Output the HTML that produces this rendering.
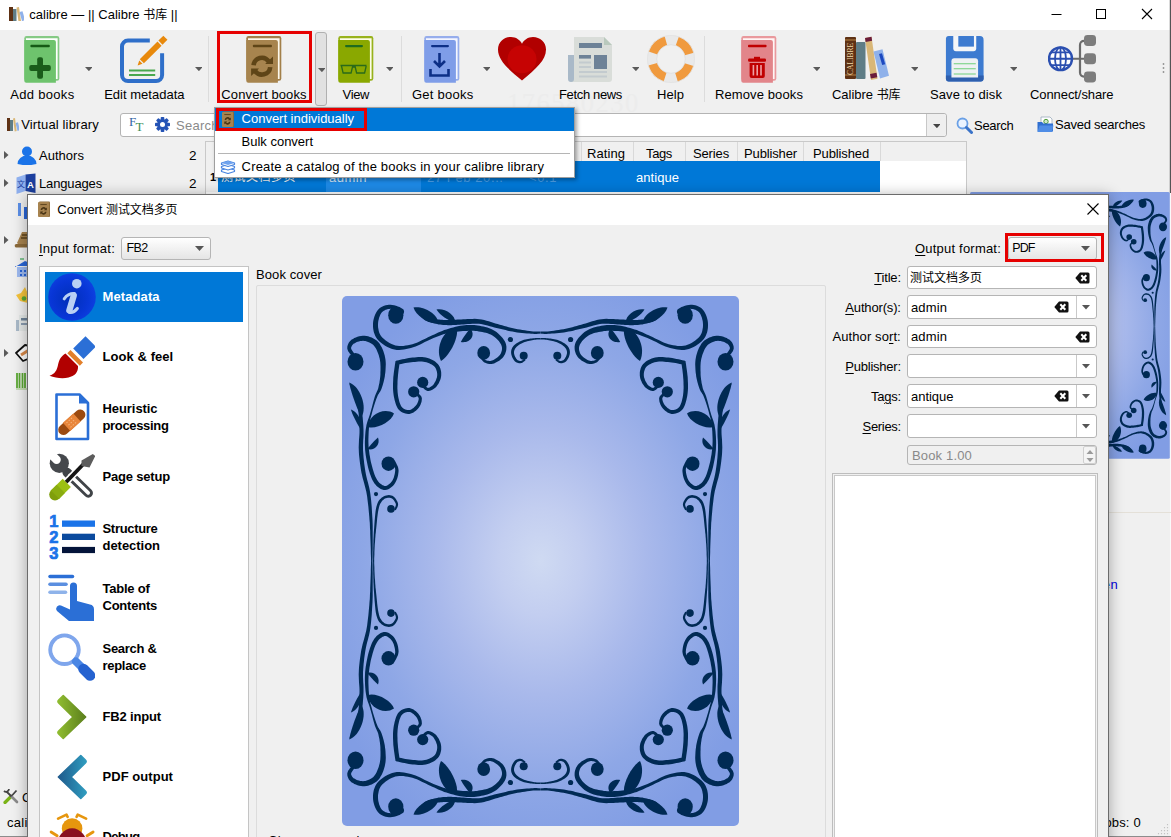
<!DOCTYPE html>
<html><head><meta charset="utf-8"><title>calibre</title>
<style>
html,body{margin:0;padding:0;}
body{width:1171px;height:837px;overflow:hidden;position:relative;background:#f0f0f0;font-family:"Liberation Sans","Noto Sans CJK SC",sans-serif;}
.b{position:absolute;box-sizing:border-box;display:block;}
.t{position:absolute;white-space:pre;line-height:1;display:block;}
u{text-decoration:underline;text-underline-offset:1.5px;text-decoration-thickness:1px;}
</style></head><body>
<div class="b" style="left:0px;top:0px;width:1171px;height:30px;background:#fff;"></div>
<svg class="b" style="left:9px;top:6px;" width="15" height="15" viewBox="0 0 15 15" preserveAspectRatio="none"><rect x="0" y="1" width="4" height="14" fill="#5e3114"/><rect x="4" y="3" width="3.500" height="12" fill="#5f7d86"/><path d="M7.500 1.500 l2.500 -0.500 l2 14 l-2.500 0.500z" fill="#d9b777"/><path d="M10.500 6 l3 -0.800 l2.500 9 l-3 0.900z" fill="#8fb1ea"/></svg>
<span class="t" style="left:29.30px;top:8.30px;font-size:13px;color:#000;letter-spacing:0.010px;">calibre — || Calibre <span style="font-size:0.923em">书库</span> ||</span>
<svg class="b" style="left:1040px;top:0px;" width="131" height="30" viewBox="0 0 131 30" preserveAspectRatio="none"><path d="M11.500 14.500 h10" stroke="#000" stroke-width="1"/><rect x="56.500" y="9.500" width="9" height="9" fill="none" stroke="#000" stroke-width="1"/><path d="M102 9 l10 10 M112 9 l-10 10" stroke="#000" stroke-width="1.100"/></svg>
<div class="b" style="left:0px;top:30px;width:1171px;height:78px;background:#f0f0f0;"></div>
<span class="t" style="left:507px;top:90px;font-family:'Liberation Serif',serif;font-size:26.500px;letter-spacing:1.500px;color:#ececec;">176580230</span>
<div class="b" style="left:208px;top:36px;width:1px;height:66px;background:#dcdcdc;"></div>
<div class="b" style="left:401px;top:36px;width:1px;height:66px;background:#dcdcdc;"></div>
<div class="b" style="left:704px;top:36px;width:1px;height:66px;background:#dcdcdc;"></div>
<svg class="b" style="left:24px;top:36px;" width="36" height="47" viewBox="0 0 36 47" preserveAspectRatio="none"><rect x="0.300" y="0" width="35" height="44.800" rx="2.200" fill="#86ca85"/><path d="M2 2.200 h31.600 v40.800 h-31.600z" fill="#fff"/><path d="M0.300 4 h29.600 a2 2 0 0 1 2 2 v40.700 h-29.600 a2 2 0 0 1 -2 -2z" fill="#6ec36d"/><rect x="6.400" y="8.700" width="19.400" height="2.500" rx="1" fill="#155a15"/><rect x="13.200" y="21.200" width="5.800" height="21.500" rx="2" fill="#1a5c1a"/><rect x="5.300" y="29.100" width="21.500" height="5.800" rx="2" fill="#1a5c1a"/></svg>
<span class="t" style="left:10.20px;top:87.80px;font-size:13px;color:#000;letter-spacing:0.318px;">Add books</span>
<svg class="b" style="left:84.6px;top:67.3px;" width="7.8" height="4.2" viewBox="0 0 9 5" preserveAspectRatio="none"><path d="M0 0 h9 l-4.500 5z" fill="#5a5a5a"/></svg>
<svg class="b" style="left:120px;top:35px;" width="48" height="48" viewBox="0 0 48 48" preserveAspectRatio="none"><path d="M29.800 5.600 H8 a6 6 0 0 0 -6 6 V40 a6 6 0 0 0 6 6 H36.100 a6 6 0 0 0 6 -6 V18.300" fill="none" stroke="#2f6fc9" stroke-width="4"/><path d="M9 35.500 h26.200 M9 40 h26.200" stroke="#4aa84e" stroke-width="1.900"/><g transform="translate(17.600 30.500) rotate(-45)" fill="#e8890c"><path d="M0 0 L4.600 -2.300 V2.300z"/><rect x="6" y="-2.900" width="25" height="5.800"/><rect x="32.300" y="-2.900" width="7" height="5.800"/></g></svg>
<span class="t" style="left:104.20px;top:87.80px;font-size:13px;color:#000;letter-spacing:0.006px;">Edit metadata</span>
<svg class="b" style="left:194.6px;top:67.3px;" width="7.8" height="4.2" viewBox="0 0 9 5" preserveAspectRatio="none"><path d="M0 0 h9 l-4.500 5z" fill="#5a5a5a"/></svg>
<svg class="b" style="left:246px;top:36px;" width="36" height="47" viewBox="0 0 36 47" preserveAspectRatio="none"><rect x="0.300" y="0" width="35" height="44.800" rx="2.200" fill="#a27f49"/><path d="M2 2.200 h31.600 v40.800 h-31.600z" fill="#fdf9ec"/><path d="M0.300 4 h29.600 a2 2 0 0 1 2 2 v40.700 h-29.600 a2 2 0 0 1 -2 -2z" fill="#a7844e"/><rect x="6.900" y="8.700" width="19" height="2.500" rx="0.800" fill="#5f4517"/><path d="M7.600 29.300 A8.300 8.300 0 0 1 22.700 25.400" fill="none" stroke="#5f4517" stroke-width="4.600"/><path d="M27 20.400 V27.900 H19.100z" fill="#5f4517"/><path d="M24.200 31.100 A8.300 8.300 0 0 1 9.100 35" fill="none" stroke="#5f4517" stroke-width="4.600"/><path d="M5.100 40.100 V32.600 H13z" fill="#5f4517"/></svg>
<span class="t" style="left:221.30px;top:87.80px;font-size:13px;color:#000;letter-spacing:0.121px;">Convert books</span>
<svg class="b" style="left:338px;top:36px;" width="36" height="47" viewBox="0 0 36 47" preserveAspectRatio="none"><rect x="0.300" y="0" width="35" height="44.800" rx="2.200" fill="#98b21c"/><path d="M2 2.200 h31.600 v40.800 h-31.600z" fill="#fdfde8"/><path d="M0.300 4 h29.600 a2 2 0 0 1 2 2 v40.700 h-29.600 a2 2 0 0 1 -2 -2z" fill="#8aa800"/><rect x="7" y="9" width="18" height="2.2" rx="1.1" fill="#1f6b1f"/><path d="M2.5 29.5 h26 M3.5 30 l1.6 7 h8 l1.6 -7 M17 30 l1.6 7 h8 l1.6 -7 M14.5 31 h2.8" fill="none" stroke="#2a6a1a" stroke-width="1.300" stroke-linejoin="round"/></svg>
<span class="t" style="left:342.60px;top:87.80px;font-size:13px;color:#000;letter-spacing:-0.386px;">View</span>
<svg class="b" style="left:385.6px;top:67.3px;" width="7.8" height="4.2" viewBox="0 0 9 5" preserveAspectRatio="none"><path d="M0 0 h9 l-4.500 5z" fill="#5a5a5a"/></svg>
<svg class="b" style="left:424px;top:36px;" width="36" height="47" viewBox="0 0 36 47" preserveAspectRatio="none"><rect x="0.300" y="0" width="35" height="44.800" rx="2.200" fill="#96adec"/><path d="M2 2.200 h31.600 v40.800 h-31.600z" fill="#f4f6ff"/><path d="M0.300 4 h29.600 a2 2 0 0 1 2 2 v40.700 h-29.600 a2 2 0 0 1 -2 -2z" fill="#7f9de8"/><rect x="7" y="9" width="18" height="2.2" rx="1.1" fill="#0d2f86"/><path d="M15.5 17 v13 M10 25 l5.5 5.5 l5.500 -5.500 M6.500 33 v6.500 h18 v-6.500" fill="none" stroke="#0d2f86" stroke-width="2.6"/></svg>
<span class="t" style="left:412.00px;top:87.80px;font-size:13px;color:#000;letter-spacing:0.249px;">Get books</span>
<svg class="b" style="left:482.6px;top:67.3px;" width="7.8" height="4.2" viewBox="0 0 9 5" preserveAspectRatio="none"><path d="M0 0 h9 l-4.500 5z" fill="#5a5a5a"/></svg>
<svg class="b" style="left:568px;top:34.8px;" width="44" height="47" viewBox="0 0 44 47" preserveAspectRatio="none"><path d="M0 20 h8 v27 h-5 a3 3 0 0 1 -3 -3 z" fill="#a9b9c8"/><path d="M6 2 h30 l8 8 v34 a3 3 0 0 1 -3 3 h-38 a3 3 0 0 0 3 -3 z" fill="#d9ddd9"/><path d="M36 2 l8 8 h-8z" fill="#b9c9bd"/><rect x="11" y="8" width="23" height="5" fill="#6d8297"/><rect x="11" y="20" width="12" height="3.600" fill="#6d8297"/><rect x="26" y="20" width="13" height="14" fill="#6d8297"/><path d="M11 27.5 h12 M11 32 h12 M11 37 h28 M11 41.500 h28" stroke="#c3cbcf" stroke-width="2"/></svg>
<span class="t" style="left:559.00px;top:87.80px;font-size:13px;color:#000;letter-spacing:-0.347px;">Fetch news</span>
<svg class="b" style="left:631.6px;top:67.3px;" width="7.8" height="4.2" viewBox="0 0 9 5" preserveAspectRatio="none"><path d="M0 0 h9 l-4.500 5z" fill="#5a5a5a"/></svg>
<svg class="b" style="left:646.8px;top:34.7px;" width="48" height="48" viewBox="0 0 48 48" preserveAspectRatio="none"><circle cx="24" cy="24" r="19" fill="none" stroke="#e9e9e9" stroke-width="9.400"/><circle cx="24" cy="24" r="19" fill="none" stroke="#f09a3e" stroke-width="9.400" stroke-dasharray="18.240 11.610" stroke-dashoffset="-5.800"/><circle cx="24" cy="24" r="14.300" fill="none" stroke="#dedede" stroke-width="0.800"/><circle cx="24" cy="24" r="23.600" fill="none" stroke="#e2e2e2" stroke-width="0.800"/></svg>
<span class="t" style="left:657.00px;top:87.80px;font-size:13px;color:#000;letter-spacing:0.066px;">Help</span>
<svg class="b" style="left:741px;top:36px;" width="36" height="47" viewBox="0 0 36 47" preserveAspectRatio="none"><rect x="0.300" y="0" width="35" height="44.800" rx="2.200" fill="#e9999d"/><path d="M2 2.200 h31.600 v40.800 h-31.600z" fill="#fff5f5"/><path d="M0.300 4 h29.600 a2 2 0 0 1 2 2 v40.700 h-29.600 a2 2 0 0 1 -2 -2z" fill="#e2858a"/><rect x="7" y="8.700" width="18.500" height="2.500" rx="0.800" fill="#c00000"/><path d="M13 20.800 h6 v2.200 h-6z" fill="#c00000"/><rect x="7.100" y="22.600" width="17.900" height="3.200" rx="1.200" fill="#c00000"/><path d="M8.600 27 h15.200 v13 a2 2 0 0 1 -2 2 h-11.200 a2 2 0 0 1 -2 -2z" fill="#c00000"/><path d="M12.400 29 v10.500 M16.200 29 v10.500 M20 29 v10.500" stroke="#eda0a3" stroke-width="1.600"/></svg>
<span class="t" style="left:715.00px;top:87.80px;font-size:13px;color:#000;letter-spacing:0.107px;">Remove books</span>
<svg class="b" style="left:812.6px;top:67.3px;" width="7.8" height="4.2" viewBox="0 0 9 5" preserveAspectRatio="none"><path d="M0 0 h9 l-4.500 5z" fill="#5a5a5a"/></svg>
<svg class="b" style="left:844.7px;top:34.3px;" width="48" height="47" viewBox="0 0 48 47" preserveAspectRatio="none"><rect x="0" y="3" width="11" height="42" rx="1" fill="#5e3114"/><rect x="0" y="5" width="11" height="2" fill="#8a5a2c"/><rect x="0" y="40" width="11" height="2" fill="#8a5a2c"/><rect x="11" y="8" width="9.500" height="37" rx="1" fill="#5f7d86"/><path d="M20 4 l6.500 -1.200 l6 42 l-6.500 1.200 z" fill="#d9b777"/><path d="M20 4 l6.500 -1.200 l0.600 4 l-6.500 1.200z M25 40 l6.500 -1.200 l0.800 4.500 l-6.500 1.200z" fill="#6b1d3a"/><path d="M28.500 17.500 l9 -2.300 l6.500 26.500 l-9 2.800 z" fill="#8fb1ea"/><path d="M34 20 l3 -0.800 l3.200 11 l-3 0.900z" fill="#1d49c0"/><text x="0" y="0" transform="translate(8.300 41) rotate(-90)" font-family="Liberation Serif,serif" font-size="7.200" fill="#f0d9a8" textLength="32" lengthAdjust="spacingAndGlyphs">CALIBRE</text></svg>
<span class="t" style="left:832.00px;top:87.80px;font-size:13px;color:#000;letter-spacing:-0.020px;">Calibre <span style="font-size:0.923em">书库</span></span>
<svg class="b" style="left:910.6px;top:67.3px;" width="7.8" height="4.2" viewBox="0 0 9 5" preserveAspectRatio="none"><path d="M0 0 h9 l-4.500 5z" fill="#5a5a5a"/></svg>
<svg class="b" style="left:945.3px;top:35px;" width="39.5" height="47.5" viewBox="0 0 43 47" preserveAspectRatio="none"><path d="M4 1 h34 a4 4 0 0 1 4 4 v38 a3 3 0 0 1 -3 3 h-35 a3 3 0 0 1 -3 -3 v-39 a3 3 0 0 1 3 -3z" fill="#3d7bd0"/><path d="M1 40 h41 v3 a3 3 0 0 1 -3 3 h-35 a3 3 0 0 1 -3 -3z" fill="#2e5fae"/><path d="M9 1 h25 v12 a3 3 0 0 1 -3 3 h-19 a3 3 0 0 1 -3 -3z" fill="#f4f6f8"/><rect x="14.500" y="1" width="17" height="10.500" fill="#3d7bd0"/><path d="M7 26 a3 3 0 0 1 3 -3 h23 a3 3 0 0 1 3 3 v16 h-29z" fill="#eef1f3"/><path d="M9.500 28.500 h24 M9.500 33.500 h24 M9.500 38.500 h24" stroke="#6fcf7c" stroke-width="1"/></svg>
<span class="t" style="left:930.00px;top:87.80px;font-size:13px;color:#000;letter-spacing:0.099px;">Save to disk</span>
<svg class="b" style="left:1009.6px;top:67.3px;" width="7.8" height="4.2" viewBox="0 0 9 5" preserveAspectRatio="none"><path d="M0 0 h9 l-4.500 5z" fill="#5a5a5a"/></svg>
<svg class="b" style="left:1048.2px;top:35.1px;" width="48" height="47.5" viewBox="0 0 48 48" preserveAspectRatio="none"><path d="M22 24 h10 M42 6 h-6 a4 4 0 0 0 -4 4 v28 a4 4 0 0 0 4 4 h6 M32 24 h10" fill="none" stroke="#6b6b6b" stroke-width="2.200"/><rect x="36" y="0" width="12" height="11" rx="3.500" fill="#7d7d7d"/><rect x="36" y="18.500" width="12" height="11" rx="3.500" fill="#7d7d7d"/><rect x="36" y="37" width="12" height="11" rx="3.500" fill="#7d7d7d"/><circle cx="12.500" cy="24" r="11.500" fill="#fff" stroke="#2b4fb0" stroke-width="2.400"/><path d="M1 24 h23 M12.500 12.500 v23 M3 17.500 h19 M3 30.500 h19" stroke="#2b4fb0" stroke-width="1.800"/><ellipse cx="12.500" cy="24" rx="5.500" ry="11.500" fill="none" stroke="#2b4fb0" stroke-width="1.800"/></svg>
<span class="t" style="left:1030.00px;top:87.80px;font-size:13px;color:#000;letter-spacing:-0.081px;">Connect/share</span>
<svg class="b" style="left:498px;top:37px;" width="48" height="43.5" viewBox="0 0 48 45" preserveAspectRatio="none"><path d="M24 45 C 10 33 0 24 0 13 C 0 5 6 0 13 0 C 18 0 22 3 24 7 C 26 3 30 0 35 0 C 42 0 48 5 48 13 C 48 24 38 33 24 45 z" fill="#b10000"/><ellipse cx="24" cy="23" rx="14.5" ry="14.5" fill="#c60303"/></svg>
<div class="b" style="left:315px;top:32px;width:12px;height:74px;background:#e1e1e1;border:1px solid #b0b0b0;border-radius:3px;"></div>
<svg class="b" style="left:317.6px;top:67.8px;" width="7.8" height="4.2" viewBox="0 0 9 5" preserveAspectRatio="none"><path d="M0 0 h9 l-4.500 5z" fill="#5a5a5a"/></svg>
<div class="b" style="left:217px;top:31px;width:95px;height:72px;border:3px solid #e60000;"></div>
<svg class="b" style="left:1161.5px;top:62px;" width="4" height="14" viewBox="0 0 4 14" preserveAspectRatio="none"><path d="M1.500 1 v2 M1.500 5 v2 M1.500 9 v2" stroke="#9a9a9a" stroke-width="1.500"/></svg>
<svg class="b" style="left:7px;top:117px;" width="12" height="15" viewBox="0 0 12 15" preserveAspectRatio="none"><rect x="0" y="1" width="3" height="13" fill="#5e3114"/><rect x="3" y="3" width="3" height="11" fill="#5f7d86"/><path d="M6 1.500 l2 -0.500 l1.700 13 l-2 0.500z" fill="#d9b777"/><path d="M8.500 6 l2.500 -0.800 l2 8 l-2.500 0.900z" fill="#8fb1ea"/></svg>
<span class="t" style="left:21.20px;top:118.00px;font-size:13px;color:#000;letter-spacing:0.145px;">Virtual library</span>
<div class="b" style="left:120px;top:113px;width:827px;height:24px;background:#fff;border:1px solid #b4b4b4;border-radius:3px;"></div>
<div class="b" style="left:926px;top:114px;width:1px;height:22px;background:#c8c8c8;"></div>
<div class="b" style="left:927px;top:114px;width:19px;height:22px;background:#efefef;border-radius:0 3px 3px 0;"></div>
<svg class="b" style="left:932.6px;top:123.8px;" width="7.8" height="4.2" viewBox="0 0 9 5" preserveAspectRatio="none"><path d="M0 0 h9 l-4.500 5z" fill="#444"/></svg>
<span class="t" style="left:129px;top:115px;font-family:'Liberation Serif',serif;font-size:13px;color:#3465a4;">F</span>
<span class="t" style="left:135.500px;top:120px;font-family:'Liberation Serif',serif;font-size:13px;color:#3e8e5a;">T</span>
<svg class="b" style="left:155px;top:117px;" width="15" height="15" viewBox="0 0 15 15" preserveAspectRatio="none"><g transform="translate(7.500 7.500)"><g fill="#2453b5"><rect x="-1.800" y="-7.500" width="3.600" height="15" rx="0.800" transform="rotate(0)"/><rect x="-1.800" y="-7.500" width="3.600" height="15" rx="0.800" transform="rotate(45)"/><rect x="-1.800" y="-7.500" width="3.600" height="15" rx="0.800" transform="rotate(90)"/><rect x="-1.800" y="-7.500" width="3.600" height="15" rx="0.800" transform="rotate(135)"/><circle r="5.400"/></g><circle r="2.500" fill="#fff"/></g></svg>
<span class="t" style="left:176.00px;top:118.50px;font-size:13px;color:#8a8a8a;letter-spacing:0.250px;">Search (For advanced search click the gear icon to the left)</span>
<svg class="b" style="left:956px;top:117px;" width="17" height="17" viewBox="0 0 17 17" preserveAspectRatio="none"><circle cx="6.500" cy="6.500" r="5" fill="#eaf3ff" stroke="#6aa0e6" stroke-width="1.800"/><path d="M10.500 10.500 l5 5" stroke="#3a73c9" stroke-width="3" stroke-linecap="round"/></svg>
<span class="t" style="left:974.00px;top:118.50px;font-size:13px;color:#000;letter-spacing:-0.282px;">Search</span>
<svg class="b" style="left:1037px;top:116px;" width="17" height="17" viewBox="0 0 17 17" preserveAspectRatio="none"><path d="M4 1 h9 l2 2 v9 h-11z" fill="#fff" stroke="#9ab" stroke-width="0.800"/><circle cx="9" cy="5.500" r="2.200" fill="#cfe8c8" stroke="#4a9a3a" stroke-width="1"/><path d="M0.500 6 h4.500 l1.500 1.500 h9.500 v8 h-15.500z" fill="#2f6fd0"/><path d="M0.500 16 l2 -6.500 h14 l-1.500 6.500z" fill="#4f8de6"/></svg>
<span class="t" style="left:1055.00px;top:118.00px;font-size:13px;color:#000;letter-spacing:-0.230px;">Saved searches</span>
<svg class="b" style="left:4px;top:151px;" width="5" height="8" viewBox="0 0 5 8" preserveAspectRatio="none"><path d="M0 0 l4.500 4 l-4.500 4z" fill="#5a5a5a"/></svg>
<svg class="b" style="left:4px;top:179px;" width="5" height="8" viewBox="0 0 5 8" preserveAspectRatio="none"><path d="M0 0 l4.500 4 l-4.500 4z" fill="#5a5a5a"/></svg>
<svg class="b" style="left:4px;top:236px;" width="5" height="8" viewBox="0 0 5 8" preserveAspectRatio="none"><path d="M0 0 l4.500 4 l-4.500 4z" fill="#5a5a5a"/></svg>
<svg class="b" style="left:4px;top:349px;" width="5" height="8" viewBox="0 0 5 8" preserveAspectRatio="none"><path d="M0 0 l4.500 4 l-4.500 4z" fill="#5a5a5a"/></svg>
<svg class="b" style="left:17px;top:146px;" width="20" height="19" viewBox="0 0 20 19" preserveAspectRatio="none"><circle cx="10" cy="5.500" r="5" fill="#1a73e8"/><path d="M0.500 18 a9.500 8.500 0 0 1 19 0 q-9.500 2.500 -19 0z" fill="#1a73e8"/></svg>
<span class="t" style="left:39.00px;top:149.00px;font-size:13px;color:#000;letter-spacing:0.028px;">Authors</span>
<span class="t" style="left:189.00px;top:148.57px;font-size:13.5px;color:#000;letter-spacing:0.000px;">2</span>
<svg class="b" style="left:16px;top:173px;" width="20" height="21" viewBox="0 0 20 21" preserveAspectRatio="none"><path d="M0.500 4.500 L9.500 1.500 V18 L0.500 21z" fill="#8fb0ee"/><path d="M9.500 1.500 L19.500 0.500 V20 L9.500 18z" fill="#1c3f9e"/></svg>
<span class="t" style="left:27px;top:180px;font-size:9.500px;color:#fff;font-weight:bold;">A</span>
<span class="t" style="left:17px;top:179.500px;font-size:8px;color:#1c3f9e;font-family:'Noto Sans CJK SC',sans-serif;">文</span>
<span class="t" style="left:39.00px;top:177.00px;font-size:13px;color:#000;letter-spacing:-0.149px;">Languages</span>
<span class="t" style="left:189.00px;top:176.57px;font-size:13.5px;color:#000;letter-spacing:0.000px;">2</span>
<svg class="b" style="left:17px;top:201.3px;" width="14" height="18" viewBox="0 0 14 18" preserveAspectRatio="none"><rect x="1" y="2" width="3" height="13" fill="#5b8fe8"/><rect x="7" y="6" width="7" height="12" fill="#2a66d8"/></svg>
<svg class="b" style="left:14px;top:230px;" width="16" height="20" viewBox="0 0 16 20" preserveAspectRatio="none"><path d="M3 13 l5 -11 h8 v13 h-11z" fill="#a7834f"/><path d="M2 14 h14 v3.500 h-13 a1.500 1.500 0 0 1 -1 -3.500z" fill="#8b6a3a"/><path d="M8 5 h6 M7 8 h7" stroke="#5c431d" stroke-width="1.300"/></svg>
<svg class="b" style="left:14px;top:258px;" width="16" height="20" viewBox="0 0 16 20" preserveAspectRatio="none"><path d="M1 9 l10 -6 l5 2 v3 h-15z" fill="#2a66d8"/><rect x="3" y="9" width="13" height="10" fill="#9db9ef"/><path d="M6 12 h2 v2 h-2z M10 12 h2 v2 h-2z M6 16 h2 v2 h-2z M10 16 h2 v2 h-2z" fill="#2a66d8"/><path d="M6 1 h4" stroke="#3aa655" stroke-width="1.200"/></svg>
<svg class="b" style="left:15px;top:286px;" width="15" height="18" viewBox="0 0 15 18" preserveAspectRatio="none"><path d="M10 1 l2.500 6 h2.500 v6 l-2 4 l-8 -2 l-4 -6 l5 -2z" fill="#f5c33b"/><circle cx="9" cy="12.500" r="2.300" fill="#5aa832"/></svg>
<svg class="b" style="left:15px;top:314px;" width="15" height="18" viewBox="0 0 15 18" preserveAspectRatio="none"><rect x="1" y="6" width="4" height="11" fill="#a9b9c8"/><rect x="4" y="1" width="11" height="16" fill="#e3e7e6"/><rect x="6" y="4" width="9" height="2.500" fill="#6d8297"/><rect x="6" y="9" width="9" height="2" fill="#8a9caf"/></svg>
<svg class="b" style="left:14px;top:342px;" width="16" height="20" viewBox="0 0 16 20" preserveAspectRatio="none"><path d="M2 11 l9 -8 l5 1 v12 l-7 3z" fill="#fff" stroke="#111" stroke-width="1.800" stroke-linejoin="round"/><path d="M7 13 l8 -5" stroke="#d98a4a" stroke-width="3"/></svg>
<svg class="b" style="left:16px;top:372px;" width="14" height="18" viewBox="0 0 14 18" preserveAspectRatio="none"><path d="M1 1 v15 M3.500 1 v15 M6.500 1 v15 M9 1 v15 M12 1 v15" stroke="#5aa832" stroke-width="1.800"/><path d="M0 17 h14" stroke="#9ac878" stroke-width="1"/></svg>
<div class="b" style="left:205px;top:141px;width:762px;height:56px;background:#fff;border:1px solid #c9c9c9;"></div>
<div class="b" style="left:206px;top:142px;width:760px;height:19px;background:#f0f0f0;"></div>
<div class="b" style="left:206px;top:161px;width:12px;height:31px;background:#f0f0f0;"></div>
<div class="b" style="left:218px;top:161px;width:662px;height:31px;background:#0078d7;"></div>
<div class="b" style="left:326px;top:161px;width:95px;height:31px;background:#1e8ae6;"></div>
<div class="b" style="left:580.5px;top:142px;width:1px;height:19px;background:#d9d9d9;"></div>
<span class="t" style="left:587.00px;top:146.50px;font-size:13px;color:#000;letter-spacing:0.070px;">Rating</span>
<div class="b" style="left:632.5px;top:142px;width:1px;height:19px;background:#d9d9d9;"></div>
<span class="t" style="left:646.00px;top:146.50px;font-size:13px;color:#000;letter-spacing:-0.365px;">Tags</span>
<div class="b" style="left:685px;top:142px;width:1px;height:19px;background:#d9d9d9;"></div>
<span class="t" style="left:693.00px;top:146.50px;font-size:13px;color:#000;letter-spacing:-0.142px;">Series</span>
<div class="b" style="left:737px;top:142px;width:1px;height:19px;background:#d9d9d9;"></div>
<span class="t" style="left:744.00px;top:146.50px;font-size:13px;color:#000;letter-spacing:-0.133px;">Publisher</span>
<div class="b" style="left:803px;top:142px;width:1px;height:19px;background:#d9d9d9;"></div>
<span class="t" style="left:813.00px;top:146.50px;font-size:13px;color:#000;letter-spacing:-0.122px;">Published</span>
<div class="b" style="left:880px;top:142px;width:1px;height:19px;background:#d9d9d9;"></div>
<span class="t" style="left:636.00px;top:170.50px;font-size:13px;color:#fff;letter-spacing:0.050px;">antique</span>
<span class="t" style="left:210.00px;top:171.69px;font-size:11px;color:#000;letter-spacing:0.000px;font-weight:bold;">1</span>
<span class="t" style="left:221.00px;top:169.60px;font-size:13px;color:#fff;letter-spacing:0.500px;"><span style="font-size:0.923em">测试文档多页</span></span>
<span class="t" style="left:329.00px;top:170.50px;font-size:13px;color:#d5e8fa;letter-spacing:0.500px;">admin</span>
<span class="t" style="left:427.00px;top:170.50px;font-size:13px;color:#4d9fe6;letter-spacing:0.600px;">27 Feb 20...</span>
<span class="t" style="left:529.00px;top:170.50px;font-size:13px;color:#4d9fe6;letter-spacing:0.600px;">&lt;0.1</span>
<div class="b" style="left:1170px;top:192.5px;width:1px;height:644px;background:#fafafa;"></div>
<div class="b" style="left:1169px;top:0px;width:2px;height:192.5px;background:linear-gradient(90deg,rgba(120,120,120,0) 0%,rgba(120,120,120,.55) 50%,#585858 55%,#505050 100%);"></div>
<svg class="b" style="left:3px;top:788px;" width="17" height="16" viewBox="0 0 17 16" preserveAspectRatio="none"><path d="M2 14.500 l6 -6" stroke="#7ab317" stroke-width="3.200" stroke-linecap="round"/><path d="M8 8 l6 6" stroke="#8a8a8a" stroke-width="2.600" stroke-linecap="round"/><path d="M8.500 8.500 l-5 -5 M9 7.500 l4.500 -5" stroke="#444" stroke-width="1.800"/><path d="M1 3 a3 3 0 0 0 5 -2" fill="none" stroke="#444" stroke-width="1.800"/></svg>
<span class="t" style="left:22.00px;top:790.50px;font-size:13px;color:#000;letter-spacing:0.000px;">Configure</span>
<span class="t" style="left:7.00px;top:816.00px;font-size:13px;color:#000;letter-spacing:0.300px;">calibre 5.12 created by Kovid Goyal</span>
<span class="t" style="left:1097.80px;top:816.00px;font-size:13px;color:#000;letter-spacing:0.150px;">Jobs: 0</span>
<div class="b" style="left:0px;top:836px;width:1171px;height:1px;background:#8c8c8c;"></div>
<div class="b" style="left:1108px;top:512px;width:63px;height:1px;background:#e4e0d8;"></div>
<span class="t" style="left:1102.80px;top:578.40px;font-size:13px;color:#0000e0;letter-spacing:0.500px;">en</span>
<svg class="b" style="left:1157px;top:823px;" width="12" height="12" viewBox="0 0 12 12" preserveAspectRatio="none"><path d="M10.500 1.500 v0.100 M7.500 4.500 v0.100 M10.500 4.500 v0.100 M4.500 7.500 v0.100 M7.500 7.500 v0.100 M10.500 7.500 v0.100 M1.500 10.500 v0.100 M4.500 10.500 v0.100 M7.500 10.500 v0.100 M10.500 10.500 v0.100" stroke="#c2c2c2" stroke-width="1.100" stroke-linecap="square"/></svg>
<div class="b" style="left:213.5px;top:106.5px;width:361px;height:71px;background:#fff;border:1px solid #9f9f9f;box-shadow:2px 2px 4px rgba(0,0,0,.35);"></div>
<div class="b" style="left:214.5px;top:107.5px;width:359px;height:23px;background:#0078d7;"></div>
<svg class="b" style="left:222px;top:111px;" width="12" height="16" viewBox="0 0 13 17" preserveAspectRatio="none"><path d="M1.500 0.500 h10.500 a1 1 0 0 1 1 1 v14.500 a1 1 0 0 1 -1 1 h-10.500z" fill="#8b6a3a"/><path d="M1 1 h10 a1 1 0 0 1 1 1 v14 a1 1 0 0 1 -1 1 h-10 a1 1 0 0 1 -1 -1 v-14 a1 1 0 0 1 1 -1z" fill="#a7834f"/><rect x="2.500" y="3.300" width="7" height="1" fill="#5c431d"/><path d="M2.800 9.500 a3.300 3.300 0 0 1 5.800 -1.800 l1 -0.900 v3 h-3.200 l1.100 -1 a1.700 1.700 0 0 0 -3 0.700z" fill="#4a3515"/><path d="M9.300 11.500 a3.300 3.300 0 0 1 -5.800 1.800 l-1 0.900 v-3 h3.200 l-1.100 1 a1.700 1.700 0 0 0 3 -0.700z" fill="#4a3515"/></svg>
<span class="t" style="left:241.60px;top:111.80px;font-size:13px;color:#fff;letter-spacing:-0.016px;">Convert individually</span>
<span class="t" style="left:241.60px;top:134.50px;font-size:13px;color:#000;letter-spacing:-0.011px;">Bulk convert</span>
<div class="b" style="left:218px;top:153px;width:352px;height:1px;background:#b5b5b5;"></div>
<svg class="b" style="left:220px;top:160px;" width="16" height="14" viewBox="0 0 16 14" preserveAspectRatio="none"><g fill="#fff" stroke="#4a86e0" stroke-width="1.200" stroke-linejoin="round"><path d="M1.500 10 l6.500 -2 l6.500 2 v1.500 l-6.500 2 l-6.500 -2z"/><path d="M1.500 6.500 l6.500 -2 l6.500 2 v1.500 l-6.500 2 l-6.500 -2z"/><path d="M1.500 3 l6.500 -2 l6.500 2 v1.500 l-6.500 2 l-6.500 -2z"/></g><path d="M1.500 3 l6.500 -2 l6.500 2 l-6.500 2z" fill="#6fa3ee"/></svg>
<span class="t" style="left:241.60px;top:159.80px;font-size:13px;color:#000;letter-spacing:0.172px;">Create a catalog of the books in your calibre library</span>
<div class="b" style="left:216px;top:108px;width:151px;height:22.5px;border:3px solid #e60000;"></div>
<svg class="b" style="left:970px;top:192px;" width="199.8" height="266.7" viewBox="0 0 397 530" preserveAspectRatio="none"><rect width="397" height="530" rx="3" fill="url(#cg)"/><use href="#orn" transform="translate(0 4) scale(1 0.991)"/></svg>
<div class="b" style="left:27px;top:194px;width:1082px;height:650px;background:#f0f0f0;border:1px solid #6b6b6b;box-shadow:0 2px 13px 1px rgba(0,0,0,.30);"></div>
<div class="b" style="left:28px;top:195px;width:1080px;height:30px;background:#fff;"></div>
<svg class="b" style="left:38px;top:201px;" width="12" height="16" viewBox="0 0 13 17" preserveAspectRatio="none"><path d="M1.500 0.500 h10.500 a1 1 0 0 1 1 1 v14.500 a1 1 0 0 1 -1 1 h-10.500z" fill="#8b6a3a"/><path d="M1 1 h10 a1 1 0 0 1 1 1 v14 a1 1 0 0 1 -1 1 h-10 a1 1 0 0 1 -1 -1 v-14 a1 1 0 0 1 1 -1z" fill="#a7834f"/><rect x="2.500" y="3.300" width="7" height="1" fill="#5c431d"/><path d="M2.800 9.500 a3.300 3.300 0 0 1 5.800 -1.800 l1 -0.900 v3 h-3.200 l1.100 -1 a1.700 1.700 0 0 0 -3 0.700z" fill="#4a3515"/><path d="M9.300 11.500 a3.300 3.300 0 0 1 -5.800 1.800 l-1 0.900 v-3 h3.200 l-1.100 1 a1.700 1.700 0 0 0 3 -0.700z" fill="#4a3515"/></svg>
<span class="t" style="left:57.30px;top:202.50px;font-size:13px;color:#000;letter-spacing:-0.059px;">Convert <span style="font-size:0.923em">测试文档多页</span></span>
<svg class="b" style="left:1087px;top:203px;" width="12" height="12" viewBox="0 0 12 12" preserveAspectRatio="none"><path d="M0.500 0.500 l11 11 M11.500 0.500 l-11 11" stroke="#000" stroke-width="1.100"/></svg>
<span class="t" style="left:39.00px;top:241.50px;font-size:13px;color:#000;letter-spacing:0.232px;"><u>I</u>nput format:</span>
<div class="b" style="left:121px;top:237px;width:90px;height:23px;background:#f0f0f0;border:1px solid #b5b5b5;border-radius:3px;background:linear-gradient(#ffffff,#f3f3f3 45%,#e5e5e5);"></div>
<span class="t" style="left:126.50px;top:241.92px;font-size:12.5px;color:#000;letter-spacing:-0.642px;">FB2</span>
<svg class="b" style="left:195px;top:246px;" width="9" height="5" viewBox="0 0 9 5" preserveAspectRatio="none"><path d="M0 0 h9 l-4.500 5z" fill="#555"/></svg>
<span class="t" style="left:915.00px;top:241.50px;font-size:13px;color:#000;letter-spacing:0.208px;"><u>O</u>utput format:</span>
<div class="b" style="left:1008px;top:237px;width:89px;height:23px;background:#f0f0f0;border:1px solid #b5b5b5;border-radius:3px;background:linear-gradient(#ffffff,#f3f3f3 45%,#e5e5e5);"></div>
<span class="t" style="left:1012.30px;top:241.92px;font-size:12.5px;color:#000;letter-spacing:-1.000px;">PDF</span>
<svg class="b" style="left:1081px;top:246px;" width="9" height="5" viewBox="0 0 9 5" preserveAspectRatio="none"><path d="M0 0 h9 l-4.500 5z" fill="#555"/></svg>
<div class="b" style="left:1005.4px;top:232.8px;width:98.6px;height:29.4px;border:3px solid #e60000;"></div>
<div class="b" style="left:39px;top:266px;width:210px;height:580px;background:#fff;border:1px solid #c4c4c4;"></div>
<div class="b" style="left:45px;top:272px;width:198px;height:50px;background:#0078d7;"></div>
<svg class="b" style="left:47.9px;top:273px;" width="48" height="48" viewBox="0 0 48 48" preserveAspectRatio="none"><defs><radialGradient id="gm" cx="0.450" cy="0.550" r="0.550"><stop offset="0" stop-color="#002fb8"/><stop offset="0.700" stop-color="#0836d6"/><stop offset="1" stop-color="#0d3fe0"/></radialGradient></defs><circle cx="24" cy="24" r="23.800" fill="url(#gm)"/><circle cx="28.800" cy="10.700" r="4.800" fill="#b9d0f4"/><g fill="none" stroke="#b9d0f4" stroke-linecap="round"><path d="M25.800 22.500 L21.300 37.500" stroke-width="6.200"/><path d="M16.200 25.800 Q20 20.300 26.500 20.600" stroke-width="3"/><path d="M21.500 39.300 Q25.500 40.200 29.300 35.500" stroke-width="3.200"/></g></svg>
<span class="t" style="left:102.50px;top:289.90px;font-size:13px;color:#fff;letter-spacing:0.106px;font-weight:bold;">Metadata</span>
<svg class="b" style="left:47px;top:333px;" width="48" height="48" viewBox="0 0 48 48" preserveAspectRatio="none"><path d="M38.500 3.300 l10.300 10.300 l-12.300 12.300 l-10.300 -10.300z" fill="#2b6fd6"/><path d="M23.500 17 l12.500 12.500 l-3.200 3.200 l-12.500 -12.500z" fill="#e27f2a"/><path d="M18.500 20.500 l12.500 12.500 c0.500 6.500 -3.500 10 -9.500 11.500 c-6 1.500 -13 0.500 -19 -1.800 c5.500 -1.700 7.500 -5.700 8.500 -10.700 c1 -5 3 -9 7.500 -11.500z" fill="#b10000"/></svg>
<span class="t" style="left:102.50px;top:349.90px;font-size:13px;color:#000;letter-spacing:0.067px;font-weight:bold;">Look &amp; feel</span>
<svg class="b" style="left:47px;top:393px;" width="48" height="48" viewBox="0 0 48 48" preserveAspectRatio="none"><path d="M9.500 1.500 h23 l8.500 8.500 v36 h-31.500z" fill="#fff" stroke="#2b6fd6" stroke-width="2.600" stroke-linejoin="round"/><path d="M32 2 v8.500 h8.500z" fill="#2b6fd6"/><g transform="translate(24.800 29.200) rotate(-42)"><rect x="-16.500" y="-5.200" width="33" height="10.400" rx="5.200" fill="#9c4a10"/><rect x="-7" y="-5.500" width="14" height="11" fill="#e8853a"/><path d="M-4.500 -3 h9 M-4.500 0 h9 M-4.500 3 h9" stroke="#f5b27a" stroke-width="1" stroke-dasharray="1.500 1.500"/></g></svg>
<span class="t" style="left:102.50px;top:401.70px;font-size:13px;color:#000;letter-spacing:-0.070px;font-weight:bold;">Heuristic</span>
<span class="t" style="left:102.50px;top:418.60px;font-size:13px;color:#000;letter-spacing:-0.336px;font-weight:bold;">processing</span>
<svg class="b" style="left:47px;top:453px;" width="48" height="48" viewBox="0 0 48 48" preserveAspectRatio="none"><path d="M20 19.300 L41.300 40" stroke="#404448" stroke-width="9.300" stroke-linecap="round"/><path d="M23 22.300 L41.200 39.900" stroke="#fff" stroke-width="3.600" stroke-linecap="round"/><circle cx="12.300" cy="10.300" r="9.600" fill="#45484c"/><path d="M9.600 6.800 L-2 -5" stroke="#fff" stroke-width="8.400" stroke-linecap="round"/><path d="M33 14.700 L21 27.200" stroke="#fff" stroke-width="7"/><path d="M37 10.500 L19 29.200" stroke="#151515" stroke-width="3.800"/><path d="M34.500 7.400 L45.800 1 L48.200 3 L42.500 14.400 L34.500 13z" fill="#5c5c5c"/><path d="M19.800 29.800 L8 41.600" stroke="#9cc012" stroke-width="11.600"/><circle cx="8" cy="41.600" r="5.800" fill="#7f9e0c"/><path d="M13.800 35.800 L8 41.600" stroke="#8aac10" stroke-width="11.600"/></svg>
<span class="t" style="left:102.50px;top:469.90px;font-size:13px;color:#000;letter-spacing:-0.186px;font-weight:bold;">Page setup</span>
<svg class="b" style="left:47px;top:513px;" width="48" height="48" viewBox="0 0 48 48" preserveAspectRatio="none"><rect x="15" y="7.500" width="33" height="6.300" fill="#1a73e8"/><rect x="15" y="20.700" width="33" height="6.300" fill="#0b4a9e"/><rect x="15" y="33.900" width="33" height="6.200" fill="#04143a"/><g font-family="Liberation Sans,sans-serif" font-weight="bold" font-size="16.500" fill="#1a73e8" stroke="#1a73e8" stroke-width="0.700"><text x="2.300" y="13.500">1</text><text x="2.300" y="29.800">2</text><text x="2.300" y="46.200">3</text></g></svg>
<span class="t" style="left:102.50px;top:521.70px;font-size:13px;color:#000;letter-spacing:-0.310px;font-weight:bold;">Structure</span>
<span class="t" style="left:102.50px;top:538.60px;font-size:13px;color:#000;letter-spacing:-0.032px;font-weight:bold;">detection</span>
<svg class="b" style="left:47px;top:573px;" width="48" height="48" viewBox="0 0 48 48" preserveAspectRatio="none"><path d="M3 3.500 h22.500" stroke="#2b6fd6" stroke-width="3.500" stroke-linecap="round"/><path d="M3 11.300 h16" stroke="#5b8fe0" stroke-width="3.500" stroke-linecap="round"/><path d="M3 19.300 h15.500" stroke="#8fb3ea" stroke-width="3.500" stroke-linecap="round"/><path d="M23 13 a3.500 3.500 0 0 1 7 0 v15 l13 3.500 a5 5 0 0 1 4 5 v11.500 h-25 l-12 -10 a3.500 3.500 0 0 1 4 -5.500 l9 4z" fill="#2b6fd6"/></svg>
<span class="t" style="left:102.50px;top:581.70px;font-size:13px;color:#000;letter-spacing:-0.234px;font-weight:bold;">Table of</span>
<span class="t" style="left:102.50px;top:598.60px;font-size:13px;color:#000;letter-spacing:-0.229px;font-weight:bold;">Contents</span>
<svg class="b" style="left:47px;top:633px;" width="48" height="48" viewBox="0 0 48 48" preserveAspectRatio="none"><circle cx="17.500" cy="16.800" r="14.200" fill="none" stroke="#7fa6ec" stroke-width="4"/><circle cx="17.500" cy="16.800" r="12.200" fill="#fff" fill-opacity="0.600"/><path d="M29 28.500 L42.500 42" stroke="#4a86e4" stroke-width="8" stroke-linecap="round"/><path d="M36.500 36 L43 42.500" stroke="#2562d0" stroke-width="10.500" stroke-linecap="round"/></svg>
<span class="t" style="left:102.50px;top:641.70px;font-size:13px;color:#000;letter-spacing:-0.295px;font-weight:bold;">Search &amp;</span>
<span class="t" style="left:102.50px;top:658.60px;font-size:13px;color:#000;letter-spacing:-0.290px;font-weight:bold;">replace</span>
<svg class="b" style="left:47px;top:693px;" width="48" height="48" viewBox="0 0 48 48" preserveAspectRatio="none"><defs><linearGradient id="gf" x1="0" x2="1"><stop offset="0" stop-color="#8fbc30"/><stop offset="1" stop-color="#5b7f1c"/></linearGradient></defs><path stroke="url(#gf)" stroke-width="1.500" stroke-linejoin="round" transform="translate(4 0) scale(1.020 1)" d="M12 2.500 l22 21.500 l-22 21.500 l-4.500 -4.500 q-1.500 -1.500 0 -3 l14 -14 l-14 -14 q-1.500 -1.500 0 -3z" fill="url(#gf)"/></svg>
<span class="t" style="left:102.50px;top:709.90px;font-size:13px;color:#000;letter-spacing:-0.160px;font-weight:bold;">FB2 input</span>
<svg class="b" style="left:47px;top:753px;" width="48" height="48" viewBox="0 0 48 48" preserveAspectRatio="none"><defs><linearGradient id="gp" x1="0" x2="1"><stop offset="0" stop-color="#1f5a8c"/><stop offset="1" stop-color="#2f9cbf"/></linearGradient></defs><path stroke="url(#gp)" stroke-width="1.500" stroke-linejoin="round" transform="translate(3.200 0) scale(1.020 1)" d="M30 2.500 l-22 21.500 l22 21.500 l4.500 -4.500 q1.500 -1.500 0 -3 l-14 -14 l14 -14 q1.500 -1.500 0 -3z" fill="url(#gp)"/></svg>
<span class="t" style="left:102.50px;top:769.90px;font-size:13px;color:#000;letter-spacing:0.046px;font-weight:bold;">PDF output</span>
<svg class="b" style="left:47px;top:813px;" width="48" height="48" viewBox="0 0 48 48" preserveAspectRatio="none"><g transform="translate(1.100 0)"><path d="M10 5.700 L18.400 1.600 L19.500 3.800 M38 5.700 L29.600 1.600 L28.500 3.800" fill="none" stroke="#e6960e" stroke-width="2.600" stroke-linecap="round" stroke-linejoin="round"/><path d="M3 19 l6 3.800 M45 19 l-6 3.800" stroke="#e6960e" stroke-width="2.800" stroke-linecap="round"/><circle cx="24" cy="15.600" r="10.300" fill="#e6960e"/><ellipse cx="24" cy="33.800" rx="15.300" ry="18.500" fill="#8a1020"/></g></svg>
<span class="t" style="left:102.50px;top:829.90px;font-size:13px;color:#000;letter-spacing:-0.688px;font-weight:bold;">Debug</span>
<span class="t" style="left:256.00px;top:268.00px;font-size:13px;color:#000;letter-spacing:0.097px;">Book cover</span>
<div class="b" style="left:256px;top:285px;width:570px;height:560px;border:1px solid #dcdcdc;border-radius:2px;"></div>
<svg class="b" style="left:342px;top:296px;" width="397" height="530" viewBox="0 0 397 530" preserveAspectRatio="none"><defs><radialGradient id="cg" cx="0.5" cy="0.5" r="0.5" gradientTransform="translate(0.5 0.5) scale(1.18 1.12) translate(-0.5 -0.5)"><stop offset="0" stop-color="#cfdaf2"/><stop offset="0.18" stop-color="#c3cef0"/><stop offset="0.45" stop-color="#a9b9eb"/><stop offset="0.75" stop-color="#8ea7e6"/><stop offset="1" stop-color="#819de4"/></radialGradient><g id="corner" fill="#002a54"><path d="M58.3 21.1 L58.6 20.7 L59.1 20.3 L59.8 19.6 L60.6 18.8 L61.3 17.9 L61.9 16.7 L62.1 15.2 L61.5 13.6 L60.4 12.7 L59.1 11.9 L57.5 11.1 L55.8 10.4 L54.0 9.8 L52.1 9.3 L50.2 8.9 L48.5 8.8 L46.9 8.8 L45.3 9.0 L43.7 9.3 L42.1 9.8 L40.5 10.4 L39.0 11.3 L37.5 12.3 L36.3 13.5 L35.1 14.9 L34.2 16.6 L33.3 18.3 L32.5 20.2 L31.9 22.2 L31.4 24.2 L31.1 26.2 L31.0 28.1 L31.0 30.0 L31.1 32.0 L31.4 33.9 L31.8 35.9 L32.5 37.9 L33.3 39.9 L34.3 41.8 L35.6 43.5 L37.2 45.2 L39.0 46.7 L41.0 48.3 L43.1 49.7 L45.4 50.9 L47.7 52.1 L50.1 52.9 L52.4 53.6 L54.8 53.9 L57.2 54.0 L59.5 53.8 L61.9 53.5 L64.3 53.1 L66.6 52.5 L68.9 51.9 L71.2 51.2 L73.6 50.4 L75.9 49.5 L78.2 48.4 L80.6 47.2 L82.8 46.1 L85.1 44.9 L87.2 43.9 L89.4 42.9 L91.5 42.1 L93.5 41.2 L95.5 40.4 L97.5 39.7 L99.4 39.0 L101.4 38.3 L103.4 37.8 L105.4 37.2 L107.6 36.8 L109.8 36.4 L112.1 36.0 L114.4 35.7 L116.7 35.5 L118.9 35.3 L121.0 35.1 L123.0 35.0 L124.9 34.9 L126.7 34.8 L128.5 34.8 L130.1 34.8 L131.8 34.8 L133.4 35.0 L135.0 35.1 L136.7 35.4 L138.5 35.7 L140.3 36.0 L142.1 36.4 L143.9 36.8 L145.6 37.3 L147.2 37.9 L148.7 38.5 L150.1 39.3 L151.5 40.2 L152.9 41.3 L154.3 42.5 L155.6 43.8 L156.8 45.1 L157.8 46.4 L158.6 47.7 L159.2 48.8 L159.6 49.9 L159.9 50.9 L160.0 52.1 L160.0 53.2 L159.8 54.4 L159.5 55.5 L159.2 56.6 L158.8 57.6 L158.2 58.5 L157.4 59.5 L156.4 60.5 L155.3 61.4 L154.2 62.3 L153.0 63.1 L151.9 63.7 L150.9 64.2 L150.0 64.6 L149.1 64.8 L148.3 64.9 L147.3 64.9 L146.4 64.8 L145.6 64.7 L144.7 64.5 L144.0 64.3 L143.4 64.0 L142.9 63.6 L142.3 63.1 L141.7 62.5 L141.1 61.8 L140.7 61.2 L140.2 60.7 L139.8 60.3 L138.2 61.7 L138.4 62.1 L138.8 62.6 L139.3 63.3 L139.8 64.0 L140.5 64.8 L141.2 65.5 L142.0 66.2 L143.0 66.7 L143.9 67.1 L144.9 67.4 L146.0 67.7 L147.1 67.9 L148.3 68.0 L149.5 67.9 L150.8 67.7 L152.1 67.4 L153.4 66.8 L154.8 66.1 L156.2 65.3 L157.6 64.4 L158.9 63.3 L160.2 62.2 L161.3 60.9 L162.2 59.6 L163.0 58.2 L163.5 56.8 L164.0 55.3 L164.3 53.7 L164.4 52.1 L164.4 50.4 L164.1 48.7 L163.6 47.0 L162.8 45.3 L161.8 43.7 L160.6 42.0 L159.2 40.4 L157.7 38.9 L156.2 37.4 L154.5 36.1 L152.9 34.9 L151.1 33.9 L149.2 33.0 L147.3 32.3 L145.4 31.6 L143.4 31.1 L141.5 30.6 L139.5 30.2 L137.7 29.8 L135.8 29.5 L134.0 29.3 L132.2 29.1 L130.3 28.9 L128.5 28.9 L126.6 28.9 L124.6 29.0 L122.6 29.2 L120.4 29.5 L118.2 29.8 L115.9 30.3 L113.5 30.8 L111.2 31.4 L108.8 32.0 L106.6 32.7 L104.4 33.4 L102.2 34.1 L100.2 34.9 L98.2 35.7 L96.2 36.6 L94.3 37.5 L92.3 38.4 L90.3 39.3 L88.2 40.3 L86.0 41.3 L83.8 42.4 L81.5 43.5 L79.3 44.6 L77.0 45.7 L74.8 46.7 L72.5 47.5 L70.4 48.2 L68.1 48.7 L65.9 49.2 L63.7 49.6 L61.4 49.9 L59.3 50.0 L57.2 50.0 L55.3 49.8 L53.4 49.4 L51.5 48.8 L49.5 48.0 L47.5 47.0 L45.6 45.8 L43.7 44.5 L42.0 43.1 L40.5 41.8 L39.4 40.5 L38.5 39.2 L37.7 37.8 L37.1 36.3 L36.7 34.7 L36.4 33.1 L36.1 31.5 L36.0 29.8 L36.0 28.3 L36.1 26.7 L36.3 25.1 L36.7 23.4 L37.1 21.8 L37.7 20.2 L38.3 18.7 L39.0 17.5 L39.7 16.5 L40.5 15.7 L41.4 15.0 L42.4 14.4 L43.6 13.8 L44.8 13.4 L46.0 13.1 L47.3 12.9 L48.5 12.8 L49.8 12.9 L51.2 13.1 L52.9 13.5 L54.5 14.0 L56.0 14.6 L57.4 15.2 L58.3 15.7 L58.7 16.0 L58.6 15.7 L58.6 15.6 L58.4 15.9 L58.0 16.5 L57.4 17.2 L56.7 17.8 L56.1 18.4 L55.7 18.9Z"/><ellipse cx="53.8" cy="19.2" rx="7.6" ry="8.6"/><ellipse cx="141.7" cy="56.9" rx="6.4" ry="6.8"/><path d="M13.4 59.0 L12.9 58.4 L12.3 57.6 L11.5 56.6 L10.8 55.6 L10.1 54.6 L9.5 53.6 L9.2 52.8 L9.1 52.3 L9.1 51.7 L9.3 51.1 L9.6 50.4 L9.9 49.7 L10.4 49.0 L10.9 48.4 L11.5 47.8 L12.3 47.4 L13.2 46.9 L14.3 46.3 L15.6 45.8 L16.9 45.4 L18.3 45.1 L19.7 44.9 L21.0 44.8 L22.2 44.9 L23.4 45.1 L24.7 45.4 L26.1 45.9 L27.4 46.5 L28.8 47.2 L30.0 47.9 L31.1 48.8 L32.0 49.8 L32.9 50.9 L33.8 52.3 L34.6 53.8 L35.3 55.5 L36.0 57.3 L36.7 59.1 L37.2 61.0 L37.7 62.8 L38.0 64.5 L38.3 66.4 L38.4 68.3 L38.5 70.3 L38.5 72.3 L38.5 74.4 L38.4 76.3 L38.4 78.2 L38.3 80.0 L38.1 81.8 L37.9 83.5 L37.6 85.3 L37.4 86.9 L37.0 88.5 L36.7 90.1 L36.4 91.5 L36.1 92.7 L35.7 93.7 L35.4 94.6 L34.9 95.5 L34.5 96.4 L34.0 97.5 L33.5 98.8 L32.9 100.3 L32.4 102.1 L31.8 104.1 L31.2 106.3 L30.6 108.6 L30.0 110.9 L29.4 113.1 L28.8 115.3 L28.2 117.3 L27.7 119.1 L27.1 120.7 L26.6 122.2 L26.0 123.7 L25.5 125.2 L25.0 126.9 L24.5 128.7 L24.2 130.7 L23.8 132.9 L23.5 135.3 L23.3 137.8 L23.1 140.5 L23.0 143.1 L22.9 145.8 L22.9 148.5 L23.0 151.1 L23.1 153.7 L23.4 156.4 L23.7 159.0 L24.1 161.6 L24.6 164.2 L25.1 166.8 L25.6 169.2 L26.1 171.5 L26.7 173.7 L27.4 175.9 L28.0 178.0 L28.8 180.1 L29.5 182.1 L30.4 183.9 L31.3 185.6 L32.3 187.2 L33.4 188.6 L34.6 189.9 L35.9 191.0 L37.3 192.0 L38.7 192.9 L40.2 193.5 L41.7 193.9 L43.2 194.0 L44.8 193.8 L46.3 193.3 L47.6 192.6 L48.9 191.6 L50.2 190.6 L51.3 189.5 L52.3 188.3 L53.1 187.0 L53.9 185.6 L54.6 184.1 L55.2 182.5 L55.7 180.8 L56.1 179.1 L56.3 177.5 L56.5 175.9 L56.6 174.4 L56.4 172.9 L56.1 171.5 L55.6 170.1 L55.0 168.9 L54.5 167.8 L53.9 166.8 L53.5 166.0 L53.2 165.5 L50.8 166.5 L51.0 167.2 L51.4 168.1 L51.8 169.0 L52.3 170.1 L52.7 171.2 L53.0 172.3 L53.2 173.4 L53.2 174.4 L53.1 175.6 L52.9 176.9 L52.6 178.4 L52.2 179.9 L51.8 181.4 L51.3 182.7 L50.7 184.0 L50.1 185.0 L49.3 185.9 L48.5 186.9 L47.6 187.8 L46.6 188.6 L45.6 189.2 L44.7 189.7 L43.9 189.9 L43.2 190.0 L42.4 189.9 L41.6 189.6 L40.6 189.2 L39.6 188.6 L38.5 187.8 L37.5 186.9 L36.6 185.9 L35.7 184.8 L34.9 183.5 L34.1 182.1 L33.3 180.4 L32.6 178.7 L31.9 176.7 L31.3 174.7 L30.6 172.6 L30.1 170.5 L29.5 168.3 L28.9 165.9 L28.4 163.5 L28.0 161.0 L27.5 158.4 L27.2 155.9 L26.9 153.4 L26.6 150.9 L26.5 148.4 L26.4 145.8 L26.4 143.2 L26.5 140.6 L26.6 138.1 L26.7 135.6 L26.9 133.3 L27.0 131.1 L27.2 129.2 L27.5 127.4 L27.8 125.8 L28.1 124.3 L28.4 122.8 L28.8 121.2 L29.3 119.5 L29.8 117.7 L30.3 115.7 L30.9 113.6 L31.6 111.3 L32.3 109.1 L33.0 106.8 L33.7 104.7 L34.4 102.8 L35.1 101.1 L35.6 99.7 L36.2 98.6 L36.8 97.7 L37.3 96.8 L37.9 95.9 L38.5 95.0 L39.1 93.8 L39.6 92.5 L40.1 91.0 L40.6 89.5 L41.1 87.8 L41.6 86.1 L42.0 84.3 L42.4 82.4 L42.8 80.5 L43.0 78.6 L43.3 76.7 L43.5 74.6 L43.6 72.5 L43.7 70.4 L43.8 68.2 L43.7 66.0 L43.5 63.8 L43.1 61.6 L42.7 59.5 L42.1 57.4 L41.4 55.3 L40.6 53.3 L39.7 51.3 L38.6 49.4 L37.5 47.6 L36.2 46.0 L34.7 44.6 L33.1 43.4 L31.4 42.4 L29.7 41.5 L27.9 40.9 L26.1 40.3 L24.4 40.0 L22.6 39.7 L20.8 39.7 L19.0 39.9 L17.2 40.3 L15.5 40.8 L13.9 41.4 L12.3 42.1 L11.0 42.9 L9.7 43.6 L8.7 44.5 L7.7 45.5 L6.9 46.6 L6.3 47.8 L5.8 49.0 L5.4 50.2 L5.3 51.4 L5.3 52.7 L5.7 54.1 L6.3 55.4 L7.1 56.6 L7.9 57.8 L8.8 58.8 L9.6 59.7 L10.2 60.5 L10.6 61.0Z"/><ellipse cx="13.5" cy="65.8" rx="8" ry="8.8"/><ellipse cx="46.5" cy="167.7" rx="7" ry="7.2"/><path d="M7.6 88.2 L8.0 89.1 L8.6 90.4 L9.3 91.8 L10.1 93.4 L10.9 95.1 L11.6 96.9 L12.4 98.7 L13.0 100.4 L13.5 102.1 L14.0 103.8 L14.5 105.6 L14.9 107.4 L15.3 109.3 L15.7 111.2 L16.0 113.2 L16.3 115.3 L16.6 117.4 L16.8 119.6 L17.0 122.0 L17.2 124.3 L17.3 126.7 L17.4 129.2 L17.4 131.6 L17.5 134.0 L17.5 136.4 L17.4 138.8 L17.2 141.2 L17.0 143.7 L16.9 146.2 L16.8 148.8 L16.7 151.4 L16.8 154.1 L16.9 156.8 L17.1 159.5 L17.4 162.3 L17.7 165.1 L18.1 167.9 L18.5 170.8 L18.9 173.6 L19.4 176.4 L20.0 179.1 L20.6 181.8 L21.4 184.5 L22.1 187.1 L22.8 189.8 L23.5 192.5 L24.2 195.2 L24.7 198.1 L25.2 201.1 L25.6 204.4 L26.0 207.7 L26.4 211.1 L26.7 214.5 L27.0 217.8 L27.3 221.0 L27.5 224.1 L27.8 227.0 L27.9 229.7 L28.0 232.3 L28.2 234.9 L28.2 237.4 L28.3 240.0 L28.4 242.5 L28.5 245.0 L28.6 247.7 L28.7 250.6 L28.8 253.5 L28.8 256.3 L28.9 259.0 L29.0 261.4 L29.0 263.5 L29.1 265.0 L30.5 265.0 L30.5 263.5 L30.6 261.4 L30.6 259.0 L30.6 256.3 L30.7 253.4 L30.7 250.5 L30.7 247.7 L30.7 245.0 L30.7 242.4 L30.7 239.9 L30.7 237.4 L30.7 234.9 L30.7 232.3 L30.7 229.6 L30.6 226.8 L30.5 223.9 L30.3 220.8 L30.1 217.6 L29.9 214.2 L29.7 210.8 L29.4 207.4 L29.1 204.0 L28.7 200.7 L28.3 197.5 L27.8 194.5 L27.2 191.6 L26.5 188.8 L25.8 186.1 L25.1 183.5 L24.5 180.9 L23.9 178.3 L23.4 175.6 L23.0 172.9 L22.6 170.2 L22.2 167.4 L21.9 164.6 L21.6 161.9 L21.4 159.2 L21.2 156.5 L21.0 153.9 L21.0 151.4 L21.0 148.9 L21.1 146.4 L21.2 143.9 L21.4 141.5 L21.5 139.0 L21.5 136.5 L21.5 134.0 L21.4 131.5 L21.3 129.0 L21.1 126.5 L20.9 124.0 L20.7 121.6 L20.4 119.2 L20.0 116.9 L19.7 114.7 L19.2 112.6 L18.7 110.6 L18.2 108.6 L17.7 106.7 L17.0 104.8 L16.4 103.1 L15.7 101.3 L15.0 99.6 L14.3 97.9 L13.4 96.1 L12.4 94.4 L11.4 92.7 L10.5 91.2 L9.6 89.8 L8.9 88.7 L8.4 87.8Z"/><path d="M32.2 265.0 L32.2 263.9 L32.2 262.3 L32.3 260.5 L32.4 258.5 L32.4 256.4 L32.5 254.2 L32.6 252.1 L32.7 250.0 L32.8 248.1 L33.0 246.3 L33.1 244.4 L33.2 242.5 L33.4 240.6 L33.5 238.6 L33.8 236.4 L34.0 234.1 L34.3 231.5 L34.6 228.5 L34.9 225.4 L35.2 222.2 L35.6 219.1 L36.0 216.1 L36.5 213.5 L37.0 211.3 L37.5 209.6 L38.1 208.1 L38.7 206.9 L39.4 205.9 L40.0 205.1 L40.7 204.3 L41.5 203.7 L42.2 203.1 L43.0 202.6 L43.9 202.3 L44.9 202.0 L45.9 201.8 L46.9 201.8 L47.8 201.8 L48.7 202.0 L49.4 202.2 L50.0 202.5 L50.7 203.1 L51.4 203.8 L52.0 204.6 L52.6 205.6 L53.2 206.5 L53.6 207.3 L53.8 208.0 L53.9 208.6 L53.8 209.3 L53.6 210.1 L53.3 210.9 L53.0 211.7 L52.7 212.5 L52.4 213.1 L52.2 213.7 L53.8 214.3 L54.0 213.9 L54.3 213.3 L54.7 212.6 L55.2 211.7 L55.6 210.8 L55.9 209.8 L56.1 208.7 L56.0 207.6 L55.7 206.5 L55.3 205.5 L54.7 204.4 L54.0 203.3 L53.3 202.2 L52.4 201.3 L51.5 200.4 L50.4 199.8 L49.3 199.4 L48.1 199.2 L46.9 199.1 L45.6 199.2 L44.3 199.4 L43.1 199.7 L41.9 200.2 L40.8 200.9 L39.8 201.6 L38.9 202.4 L38.0 203.3 L37.1 204.3 L36.3 205.6 L35.6 207.0 L35.0 208.7 L34.4 210.7 L33.9 213.0 L33.5 215.7 L33.2 218.8 L32.9 221.9 L32.6 225.2 L32.4 228.3 L32.2 231.3 L32.0 233.9 L31.8 236.3 L31.7 238.4 L31.6 240.5 L31.5 242.5 L31.4 244.3 L31.4 246.2 L31.3 248.1 L31.3 250.0 L31.2 252.0 L31.2 254.2 L31.1 256.3 L31.1 258.5 L31.1 260.5 L31.1 262.3 L31.1 263.8 L31.0 265.0Z"/><ellipse cx="49" cy="212.9" rx="3.8" ry="3.8"/><ellipse cx="34" cy="198.1" rx="2.1" ry="2.1"/><path d="M54.8 68.8 L56.0 68.6 L57.5 68.3 L59.3 67.9 L61.2 67.5 L63.3 67.1 L65.4 66.8 L67.4 66.4 L69.3 66.2 L71.1 66.0 L72.9 65.9 L74.7 65.7 L76.5 65.6 L78.3 65.5 L79.9 65.5 L81.5 65.7 L82.9 65.9 L84.4 66.2 L85.8 66.7 L87.2 67.2 L88.5 67.9 L89.7 68.5 L90.8 69.3 L91.8 70.0 L92.6 70.8 L93.2 71.6 L93.8 72.5 L94.2 73.6 L94.6 74.7 L94.9 75.8 L95.1 77.0 L95.2 78.1 L95.2 79.2 L95.1 80.2 L94.9 81.4 L94.5 82.6 L94.1 83.8 L93.6 85.0 L93.0 86.1 L92.4 87.1 L91.9 88.0 L91.3 88.7 L90.6 89.4 L89.9 90.1 L89.1 90.6 L88.3 91.1 L87.6 91.4 L86.9 91.7 L86.4 91.8 L86.0 91.9 L85.6 91.7 L85.1 91.5 L84.4 91.1 L83.8 90.6 L83.3 90.1 L82.7 89.7 L82.3 89.4 L80.7 91.6 L81.0 91.8 L81.4 92.2 L82.0 92.8 L82.7 93.4 L83.5 94.0 L84.4 94.5 L85.5 94.9 L86.6 95.0 L87.7 94.8 L88.7 94.5 L89.8 94.0 L90.8 93.5 L91.9 92.8 L92.9 92.0 L93.9 91.2 L94.7 90.2 L95.5 89.1 L96.3 88.0 L97.0 86.7 L97.6 85.3 L98.2 83.9 L98.7 82.4 L99.0 80.9 L99.2 79.4 L99.2 78.0 L99.2 76.5 L99.0 75.0 L98.6 73.5 L98.2 72.1 L97.5 70.6 L96.8 69.3 L95.8 68.0 L94.7 66.9 L93.4 65.8 L92.0 64.8 L90.5 64.0 L88.9 63.2 L87.3 62.5 L85.6 62.0 L83.9 61.5 L82.0 61.2 L80.2 61.0 L78.3 61.0 L76.3 61.1 L74.4 61.2 L72.5 61.4 L70.6 61.6 L68.7 61.8 L66.8 62.1 L64.6 62.4 L62.5 62.9 L60.4 63.3 L58.4 63.8 L56.6 64.2 L55.1 64.6 L54.0 64.8Z"/><path d="M53.5 64.9 L53.3 66.4 L53.0 68.3 L52.7 70.6 L52.3 73.2 L51.9 75.9 L51.6 78.7 L51.3 81.3 L51.2 83.7 L51.1 85.9 L51.0 88.0 L51.0 90.2 L51.0 92.3 L51.1 94.3 L51.3 96.4 L51.5 98.3 L51.8 100.2 L52.2 102.1 L52.6 104.0 L53.1 105.8 L53.6 107.6 L54.2 109.3 L55.0 110.9 L55.8 112.4 L56.8 113.7 L57.9 114.8 L59.1 115.8 L60.5 116.6 L61.9 117.1 L63.3 117.6 L64.7 117.8 L66.1 118.0 L67.5 117.9 L68.9 117.6 L70.3 117.1 L71.5 116.4 L72.7 115.6 L73.9 114.7 L74.9 113.8 L75.9 112.8 L76.7 111.8 L77.4 110.7 L78.1 109.6 L78.6 108.4 L79.1 107.1 L79.5 105.9 L79.7 104.7 L79.8 103.5 L79.9 102.4 L79.6 101.3 L79.2 100.3 L78.5 99.4 L77.9 98.7 L77.2 98.2 L76.7 97.7 L76.2 97.3 L76.0 97.1 L74.0 98.9 L74.3 99.3 L74.8 99.8 L75.3 100.2 L75.8 100.7 L76.2 101.3 L76.5 101.8 L76.7 102.2 L76.7 102.6 L76.7 103.2 L76.5 104.0 L76.3 105.0 L75.9 106.0 L75.5 107.0 L75.0 108.0 L74.5 108.8 L73.9 109.6 L73.2 110.3 L72.4 111.1 L71.5 111.9 L70.6 112.6 L69.6 113.2 L68.7 113.7 L67.9 114.0 L67.1 114.1 L66.2 114.1 L65.3 114.0 L64.3 113.8 L63.3 113.5 L62.3 113.0 L61.4 112.5 L60.5 111.8 L59.8 111.1 L59.2 110.2 L58.6 109.1 L58.1 107.8 L57.5 106.3 L57.1 104.7 L56.7 103.0 L56.3 101.3 L56.0 99.6 L55.8 97.8 L55.6 96.0 L55.5 94.1 L55.4 92.2 L55.4 90.2 L55.5 88.1 L55.5 86.0 L55.6 83.9 L55.8 81.7 L56.0 79.1 L56.3 76.5 L56.6 73.8 L57.0 71.2 L57.3 68.9 L57.5 66.9 L57.7 65.5Z"/><ellipse cx="80.7" cy="86.4" rx="5.6" ry="5.6"/><ellipse cx="71.7" cy="95.8" rx="5.6" ry="5.6"/><path d="M75.6 16.4 L76.1 17.0 L76.7 17.8 L77.4 18.8 L78.3 19.8 L79.2 21.0 L80.3 22.1 L81.4 23.1 L82.6 24.0 L83.8 24.7 L85.1 25.3 L86.5 25.9 L87.9 26.3 L89.3 26.8 L90.7 27.1 L92.2 27.5 L93.6 27.8 L95.1 28.1 L96.6 28.4 L98.1 28.6 L99.6 28.8 L101.2 28.9 L102.7 29.0 L104.3 29.1 L106.0 29.2 L107.6 29.2 L109.2 29.2 L110.8 29.1 L112.4 29.0 L114.1 28.9 L115.8 28.8 L117.5 28.7 L119.4 28.6 L121.5 28.5 L123.6 28.3 L125.9 28.1 L128.1 27.9 L130.4 27.8 L132.6 27.7 L134.8 27.7 L136.9 27.8 L139.0 28.1 L141.2 28.5 L143.3 29.0 L145.5 29.6 L147.8 30.2 L150.0 30.8 L152.3 31.4 L154.6 32.0 L156.8 32.5 L159.1 33.0 L161.3 33.6 L163.6 34.1 L165.8 34.7 L168.1 35.2 L170.4 35.6 L172.7 36.1 L175.1 36.4 L177.5 36.7 L180.0 37.0 L182.5 37.2 L184.9 37.4 L187.1 37.6 L189.1 37.7 L190.9 37.8 L192.4 37.9 L193.8 37.9 L194.9 37.9 L195.9 37.8 L196.8 37.8 L197.5 37.7 L198.1 37.6 L198.6 37.6 L198.4 35.4 L197.9 35.4 L197.3 35.4 L196.6 35.5 L195.8 35.5 L194.9 35.6 L193.8 35.6 L192.5 35.5 L191.1 35.4 L189.4 35.2 L187.4 34.9 L185.2 34.7 L182.8 34.3 L180.4 34.0 L178.0 33.6 L175.6 33.2 L173.3 32.7 L171.1 32.3 L168.9 31.7 L166.7 31.2 L164.5 30.5 L162.3 29.9 L160.1 29.3 L157.8 28.7 L155.6 28.0 L153.4 27.4 L151.2 26.7 L149.0 26.0 L146.8 25.3 L144.5 24.7 L142.2 24.1 L139.8 23.5 L137.5 23.2 L135.1 22.9 L132.6 22.8 L130.2 22.9 L127.8 23.0 L125.5 23.1 L123.3 23.2 L121.2 23.3 L119.2 23.4 L117.3 23.5 L115.5 23.6 L113.7 23.7 L112.1 23.8 L110.6 23.9 L109.0 24.0 L107.5 24.0 L106.0 24.0 L104.5 24.0 L103.0 23.9 L101.5 23.9 L100.1 23.8 L98.6 23.7 L97.2 23.5 L95.8 23.4 L94.4 23.2 L93.0 23.0 L91.6 22.8 L90.3 22.6 L88.9 22.3 L87.7 22.1 L86.4 21.8 L85.3 21.4 L84.2 21.0 L83.1 20.5 L82.0 19.9 L80.9 19.1 L79.8 18.3 L78.7 17.5 L77.8 16.7 L77.0 16.1 L76.4 15.6Z"/><path d="M198.5 42.0 L197.8 42.0 L197.0 42.1 L196.0 42.1 L194.8 42.1 L193.6 42.1 L192.4 42.2 L191.1 42.3 L189.9 42.4 L188.6 42.6 L187.4 42.8 L186.0 43.0 L184.7 43.2 L183.4 43.5 L182.0 43.8 L180.7 44.2 L179.5 44.7 L178.3 45.2 L177.2 45.7 L176.1 46.4 L175.0 47.0 L173.9 47.7 L173.0 48.5 L172.1 49.3 L171.4 50.1 L170.7 50.9 L170.2 51.8 L169.8 52.8 L169.4 53.7 L169.2 54.7 L169.1 55.7 L169.1 56.7 L169.2 57.7 L169.4 58.7 L169.7 59.8 L170.1 60.9 L170.6 61.9 L171.2 63.0 L171.8 63.9 L172.4 64.7 L173.0 65.5 L173.8 66.0 L174.6 66.5 L175.4 66.8 L176.2 67.0 L177.0 67.2 L177.7 67.2 L178.4 67.2 L179.2 67.1 L179.9 66.9 L180.7 66.5 L181.3 66.1 L181.9 65.6 L182.4 65.2 L182.9 64.8 L183.3 64.4 L183.5 64.2 L182.5 62.8 L182.1 63.0 L181.7 63.3 L181.2 63.7 L180.7 64.0 L180.2 64.4 L179.7 64.7 L179.2 64.8 L178.8 64.9 L178.4 64.9 L177.8 64.9 L177.3 64.8 L176.8 64.6 L176.2 64.5 L175.8 64.2 L175.3 63.9 L175.0 63.5 L174.5 63.0 L174.1 62.4 L173.6 61.6 L173.1 60.7 L172.7 59.8 L172.4 58.9 L172.2 58.1 L172.0 57.3 L172.0 56.6 L172.0 55.9 L172.1 55.2 L172.3 54.5 L172.5 53.9 L172.8 53.2 L173.2 52.5 L173.6 51.9 L174.2 51.3 L174.9 50.6 L175.6 49.9 L176.5 49.3 L177.5 48.6 L178.4 48.0 L179.5 47.4 L180.5 46.9 L181.5 46.5 L182.7 46.0 L183.9 45.7 L185.2 45.3 L186.5 45.0 L187.7 44.7 L189.0 44.4 L190.1 44.2 L191.3 44.0 L192.5 43.8 L193.7 43.7 L194.9 43.6 L196.0 43.5 L197.0 43.5 L197.9 43.4 L198.5 43.4Z"/><ellipse cx="181.7" cy="59.8" rx="4" ry="4"/><ellipse cx="168.4" cy="43.5" rx="2.6" ry="2.6"/><path d="M96.0 26.0 C95.7 18.1 81.0 9.4 71.5 11.5 C74.3 20.7 89.0 29.4 96.0 26.0Z"/><path d="M113.0 25.8 C113.5 19.0 102.4 11.7 94.5 13.5 C97.5 19.0 108.6 26.4 113.0 25.8Z"/><path d="M114.5 32.0 C101.9 32.1 92.6 51.9 99.0 65.0 C108.3 59.3 117.6 39.5 114.5 32.0Z"/><path d="M128.5 32.5 C126.4 34.1 120.6 42.2 118.8 46.0 C128.1 47.6 133.9 39.5 128.5 32.5Z"/><path d="M19.5 121.0 C25.6 111.0 18.2 90.3 7.2 86.5 C8.1 93.9 15.5 114.6 19.5 121.0Z"/><path d="M19.3 134.0 C21.8 127.6 15.5 115.3 8.9 113.5 C10.0 118.1 16.3 130.4 19.3 134.0Z"/><path d="M26.0 131.0 C34.0 133.7 49.6 125.6 52.0 117.5 C41.9 110.7 26.3 118.8 26.0 131.0Z"/><path d="M25.3 153.0 C32.3 155.3 38.8 148.4 36.0 141.5 C33.6 143.5 27.1 150.4 25.3 153.0Z"/></g><g id="orn"><use href="#corner"/><use href="#corner" transform="translate(397.0 0) scale(-1 1)"/><use href="#corner" transform="translate(0 530.0) scale(1 -1)"/><use href="#corner" transform="translate(397.0 530.0) scale(-1 -1)"/></g></defs><rect width="397" height="530" rx="5" fill="url(#cg)"/><use href="#orn"/></svg>
<span class="t" style="left:268.00px;top:834.30px;font-size:13px;color:#000;letter-spacing:0.300px;">Change cover image:</span>
<div class="b" style="left:907px;top:266px;width:190px;height:23px;background:#fff;border:1px solid #b5b5b5;border-radius:3px;"></div>
<span class="t" style="left:874.30px;top:271.00px;font-size:13px;color:#000;letter-spacing:-0.198px;"><u>T</u>itle:</span>
<div class="b" style="left:907px;top:295px;width:190px;height:24px;background:#fff;border:1px solid #b5b5b5;border-radius:3px;"></div>
<span class="t" style="left:845.30px;top:301.00px;font-size:13px;color:#000;letter-spacing:-0.157px;"><u>A</u>uthor(s):</span>
<div class="b" style="left:907px;top:325px;width:190px;height:23px;background:#fff;border:1px solid #b5b5b5;border-radius:3px;"></div>
<span class="t" style="left:832.50px;top:329.80px;font-size:13px;color:#000;letter-spacing:0.092px;">Author so<u>r</u>t:</span>
<div class="b" style="left:907px;top:354px;width:190px;height:24px;background:#fff;border:1px solid #b5b5b5;border-radius:3px;"></div>
<span class="t" style="left:845.30px;top:360.00px;font-size:13px;color:#000;letter-spacing:-0.231px;"><u>P</u>ublisher:</span>
<div class="b" style="left:907px;top:384px;width:190px;height:24px;background:#fff;border:1px solid #b5b5b5;border-radius:3px;"></div>
<span class="t" style="left:871.00px;top:390.00px;font-size:13px;color:#000;letter-spacing:-0.254px;">Ta<u>g</u>s:</span>
<div class="b" style="left:907px;top:414px;width:190px;height:23.5px;background:#fff;border:1px solid #b5b5b5;border-radius:3px;"></div>
<span class="t" style="left:862.50px;top:419.50px;font-size:13px;color:#000;letter-spacing:-0.309px;"><u>S</u>eries:</span>
<span class="t" style="left:910.00px;top:270.50px;font-size:13px;color:#000;letter-spacing:0.000px;"><span style="font-size:0.923em">测试文档多页</span></span>
<svg class="b" style="left:1075px;top:271.5px;" width="15" height="12" viewBox="0 0 15 12" preserveAspectRatio="none"><path d="M5 0.500 h8 a1.500 1.500 0 0 1 1.500 1.500 v8 a1.500 1.500 0 0 1 -1.500 1.500 h-8 l-4.700 -5.500z" fill="#111"/><path d="M6.300 3.300 l5 5.400 M11.300 3.300 l-5 5.400" stroke="#fff" stroke-width="2"/></svg>
<span class="t" style="left:911.00px;top:300.50px;font-size:13px;color:#000;letter-spacing:0.118px;">admin</span>
<svg class="b" style="left:1054px;top:301px;" width="15" height="12" viewBox="0 0 15 12" preserveAspectRatio="none"><path d="M5 0.500 h8 a1.500 1.500 0 0 1 1.500 1.500 v8 a1.500 1.500 0 0 1 -1.500 1.500 h-8 l-4.700 -5.500z" fill="#111"/><path d="M6.300 3.300 l5 5.400 M11.300 3.300 l-5 5.400" stroke="#fff" stroke-width="2"/></svg>
<div class="b" style="left:1076px;top:296px;width:1px;height:22px;background:#c9c9c9;"></div>
<svg class="b" style="left:1082px;top:304.5px;" width="8" height="5" viewBox="0 0 8 5" preserveAspectRatio="none"><path d="M0 0 h8 l-4 4.500z" fill="#555"/></svg>
<span class="t" style="left:911.00px;top:330.00px;font-size:13px;color:#000;letter-spacing:0.118px;">admin</span>
<svg class="b" style="left:1075px;top:330.5px;" width="15" height="12" viewBox="0 0 15 12" preserveAspectRatio="none"><path d="M5 0.500 h8 a1.500 1.500 0 0 1 1.500 1.500 v8 a1.500 1.500 0 0 1 -1.500 1.500 h-8 l-4.700 -5.500z" fill="#111"/><path d="M6.300 3.300 l5 5.400 M11.300 3.300 l-5 5.400" stroke="#fff" stroke-width="2"/></svg>
<div class="b" style="left:1076px;top:355px;width:1px;height:22px;background:#c9c9c9;"></div>
<svg class="b" style="left:1082px;top:363.5px;" width="8" height="5" viewBox="0 0 8 5" preserveAspectRatio="none"><path d="M0 0 h8 l-4 4.500z" fill="#555"/></svg>
<span class="t" style="left:911.00px;top:389.50px;font-size:13px;color:#000;letter-spacing:-0.022px;">antique</span>
<svg class="b" style="left:1054px;top:390px;" width="15" height="12" viewBox="0 0 15 12" preserveAspectRatio="none"><path d="M5 0.500 h8 a1.500 1.500 0 0 1 1.500 1.500 v8 a1.500 1.500 0 0 1 -1.500 1.500 h-8 l-4.700 -5.500z" fill="#111"/><path d="M6.300 3.300 l5 5.400 M11.300 3.300 l-5 5.400" stroke="#fff" stroke-width="2"/></svg>
<div class="b" style="left:1076px;top:385px;width:1px;height:22px;background:#c9c9c9;"></div>
<svg class="b" style="left:1082px;top:393.5px;" width="8" height="5" viewBox="0 0 8 5" preserveAspectRatio="none"><path d="M0 0 h8 l-4 4.500z" fill="#555"/></svg>
<div class="b" style="left:1076px;top:415px;width:1px;height:21.5px;background:#c9c9c9;"></div>
<svg class="b" style="left:1082px;top:423.5px;" width="8" height="5" viewBox="0 0 8 5" preserveAspectRatio="none"><path d="M0 0 h8 l-4 4.500z" fill="#555"/></svg>
<div class="b" style="left:907px;top:445px;width:190px;height:20px;background:#f0f0f0;border:1px solid #b5b5b5;border-radius:3px;"></div>
<span class="t" style="left:912.00px;top:448.50px;font-size:13px;color:#8a8a8a;letter-spacing:0.162px;">Book 1.00</span>
<div class="b" style="left:1083px;top:446px;width:13px;height:18px;background:#f4f4f4;border:1px solid #d0d0d0;border-radius:2px;"></div>
<svg class="b" style="left:1086px;top:448.5px;" width="8" height="14" viewBox="0 0 8 14" preserveAspectRatio="none"><path d="M0.500 5 l3.500 -4 l3.500 4z M0.500 9 l3.500 4 l3.500 -4z" fill="#9a9a9a"/></svg>
<div class="b" style="left:832px;top:473px;width:266px;height:372px;background:#f0f0f0;border:1px solid #bdbdbd;"></div>
<div class="b" style="left:834px;top:475px;width:262px;height:370px;background:#fff;border:1px solid #c8c8c8;"></div>
</body></html>
